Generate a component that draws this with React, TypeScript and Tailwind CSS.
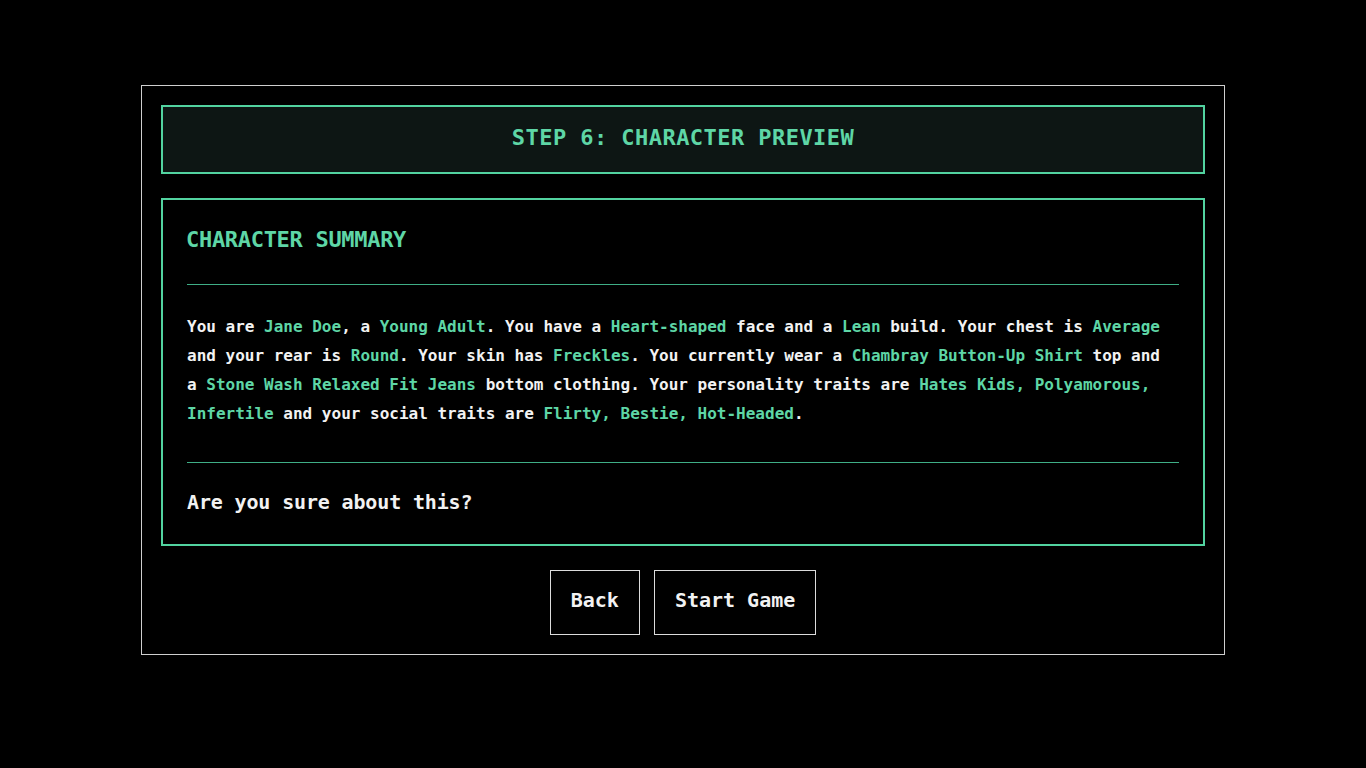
import React from 'react';

const G = ({ children }: { children: React.ReactNode }) => (
  <span className="text-[#5ed6a6]">{children}</span>
);

export default function App() {
  return (
    <div className="min-h-screen w-full bg-black pt-[85px] font-['DejaVu_Sans_Mono',monospace] font-bold text-[#f2f2f2]">
      <div className="mx-auto w-[1084px] border border-[#cfcfcf] p-[19px]">
        {/* header */}
        <div className="border-2 border-[#52d3a0] bg-[#0d1614] pt-[18px] pb-[21px] text-center">
          <h1 className="text-[22px] leading-[26px] tracking-[0.45px] text-[#5ed6a6]">
            STEP 6: CHARACTER PREVIEW
          </h1>
        </div>

        {/* summary */}
        <div className="mt-6 border-2 border-[#52d3a0] px-6 pt-[27px] pb-[30px]">
          <h2 className="-ml-px text-[22px] leading-[26px] tracking-[-0.3px] text-[#5ed6a6]">
            CHARACTER SUMMARY
          </h2>
          <div className="mt-[31px] h-px bg-[#3fae86]" />
          <p className="mt-[27px] pr-[10px] text-[16px] leading-[29px]">
            You are <G>Jane Doe</G>, a <G>Young Adult</G>. You have a <G>Heart-shaped</G> face and a{' '}
            <G>Lean</G> build. Your chest is <G>Average</G> and your rear is <G>Round</G>. Your skin has{' '}
            <G>Freckles</G>. You currently wear a <G>Chambray Button-Up Shirt</G> top and a{' '}
            <G>Stone Wash Relaxed Fit Jeans</G> bottom clothing. Your personality traits are{' '}
            <G>Hates Kids, Polyamorous, Infertile</G> and your social traits are{' '}
            <G>Flirty, Bestie, Hot-Headed</G>.
          </p>
          <div className="mt-[34px] h-px bg-[#3fae86]" />
          <p className="mt-[27px] text-[20px] leading-[24px] tracking-[-0.15px]">Are you sure about this?</p>
        </div>

        {/* actions */}
        <div className="mt-6 flex justify-center gap-[14px]">
          <button className="border border-[#dcdcdc] bg-black px-5 pt-[18px] pb-[22px] text-[20px] leading-[23px] font-bold text-[#f2f2f2]">
            Back
          </button>
          <button className="border border-[#dcdcdc] bg-black px-5 pt-[18px] pb-[22px] text-[20px] leading-[23px] font-bold text-[#f2f2f2]">
            Start Game
          </button>
        </div>
      </div>
    </div>
  );
}
